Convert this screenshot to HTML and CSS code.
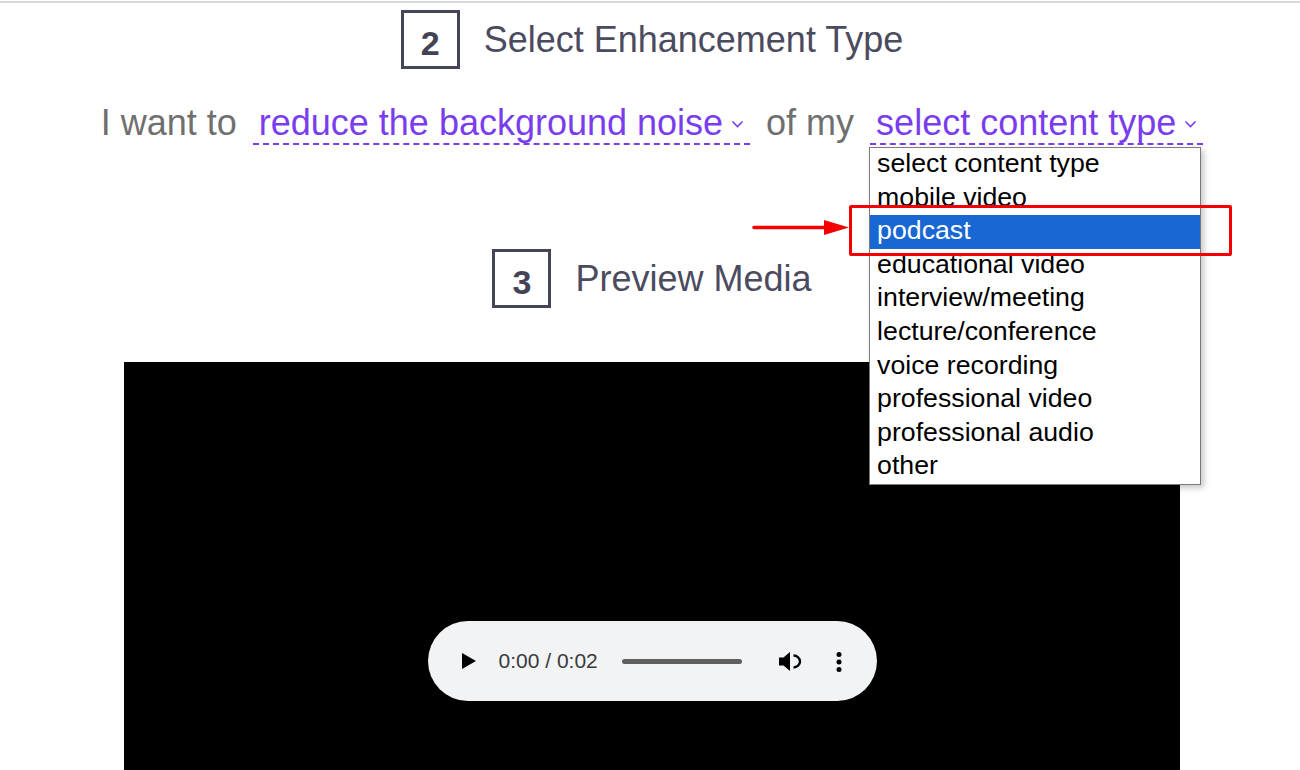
FILE: index.html
```html
<!DOCTYPE html>
<html lang="en">
<head>
    <meta charset="UTF-8">
    <meta name="viewport" content="width=device-width, initial-scale=1.0">
    <title>Enhance Media</title>
    <link rel="stylesheet" href="styles.css">
</head>
<body>
    <div class="topline"></div>
    <main class="page">
        <section class="step step-type">
            <div class="step-num">2</div>
            <h2 class="step-title">Select Enhancement Type</h2>
        </section>

        <div class="sentence">
            <span class="plain">I want to</span>
            <div class="pick">reduce the background noise<svg class="chev" width="13" height="8" viewBox="0 0 13 8"><polyline points="1.5,1.5 6.5,6.5 11.5,1.5" /></svg></div>
            <span class="plain">of my</span>
            <div class="pick pick-open">select content type<svg class="chev" width="13" height="8" viewBox="0 0 13 8"><polyline points="1.5,1.5 6.5,6.5 11.5,1.5" /></svg>
                <ul class="options">
                    <li>select content type</li>
                    <li>mobile video</li>
                    <li class="active">podcast</li>
                    <li>educational video</li>
                    <li>interview/meeting</li>
                    <li>lecture/conference</li>
                    <li>voice recording</li>
                    <li>professional video</li>
                    <li>professional audio</li>
                    <li>other</li>
                    <!-- annotation drawn on top of the open list -->
                    <svg class="arrow" width="97" height="15" viewBox="0 0 97 15">
                        <line x1="2" y1="7.5" x2="74" y2="7.5" />
                        <polygon points="72,0 97,7.5 72,15" />
                    </svg>
                    <span class="callout"></span>
                </ul>
            </div>
        </div>

        <section class="step step-preview">
            <div class="step-num">3</div>
            <h2 class="step-title">Preview Media</h2>
        </section>

        <div class="video">
            <div class="player">
                <svg class="play" width="14" height="16" viewBox="0 0 14 16"><polygon points="0,0 14,8 0,16" /></svg>
                <span class="time">0:00 / 0:02</span>
                <div class="track"></div>
                <svg class="volume" width="24" height="21" viewBox="0 0 24 21">
                    <path class="spk" d="M0 6.5H4.5L11 1V20L4.5 14.5H0Z" />
                    <path class="wave" d="M14.5 4.5a6.5 6 0 0 1 0 12" />
                </svg>
                <svg class="more" width="10" height="20" viewBox="0 0 10 20">
                    <circle cx="5" cy="2.5" r="2.5" />
                    <circle cx="5" cy="10" r="2.5" />
                    <circle cx="5" cy="17.5" r="2.5" />
                </svg>
            </div>
        </div>
    </main>
</body>
</html>
```

FILE: styles.css
```css
html {
    overflow: hidden;
}
body {
    margin: 0;
    padding-top: 1px;
    background: #fff;
    font-family: "Liberation Sans", Arial, sans-serif;
}
.topline {
    height: 2px;
    background: #d9d9d9;
}
.page {
    padding-left: 4px;
}

.step {
    display: flex;
    justify-content: center;
    align-items: center;
    gap: 24px;
}
.step-type {
    margin-top: 7px;
}
.step-preview {
    margin-top: 104px;
}
.step-num {
    box-sizing: border-box;
    width: 59px;
    height: 59px;
    padding-top: 6px;
    border: 3px solid #454558;
    display: flex;
    align-items: center;
    justify-content: center;
    font-size: 34px;
    font-weight: bold;
    line-height: 1;
    color: #434356;
}
.step-title {
    margin: 0;
    font-size: 36px;
    font-weight: normal;
    line-height: 1.15;
    color: #4b4b5f;
}

.sentence {
    margin-top: 33px;
    display: flex;
    justify-content: center;
    align-items: baseline;
    gap: 16px;
    font-size: 36px;
    line-height: 41px;
}
.plain {
    color: #6f6f6f;
}
.pick {
    position: relative;
    padding: 0 6px 0 6px;
    color: #7a3ded;
    border-bottom: 2px dashed #7a3ded;
    white-space: nowrap;
}
.chev {
    margin-left: 8px;
    vertical-align: 7px;
}
.chev polyline {
    fill: none;
    stroke: #7a3ded;
    stroke-width: 1.6;
}

.options {
    position: absolute;
    top: calc(100% + 4px);
    left: -1px;
    width: 332px;
    box-sizing: border-box;
    margin: 0;
    padding: 0;
    list-style: none;
    background: #fff;
    border: 1px solid #7a7a7a;
    box-shadow: 3px 3px 6px rgba(0, 0, 0, 0.22);
    font-size: 26.7px;
    line-height: 30px;
    color: #000;
    z-index: 5;
}
.options li {
    height: 33.6px;
    padding: 0 7px;
}
.options li.active {
    background: #1967d2;
    color: #fff;
}
.arrow {
    position: absolute;
    left: -118px;
    top: 72px;
}
.arrow line {
    stroke: #f40000;
    stroke-width: 3.5;
    stroke-linecap: round;
}
.arrow polygon {
    fill: #f40000;
}
.callout {
    position: absolute;
    left: -21px;
    top: 56.5px;
    width: 383px;
    height: 51px;
    box-sizing: border-box;
    border: 3px solid #f40000;
    border-radius: 2px;
}

.video {
    width: 1056px;
    height: 598px;
    margin: 54px auto 0;
    background: #000;
    display: flex;
    align-items: center;
    justify-content: center;
}
.player {
    box-sizing: border-box;
    width: 449px;
    height: 80px;
    padding-left: 34px;
    border-radius: 40px;
    background: #f1f3f4;
    display: flex;
    align-items: center;
}
.play {
    fill: #000;
}
.time {
    margin-left: 23px;
    font-size: 21px;
    color: #3a3a3a;
}
.track {
    width: 120px;
    height: 5px;
    margin-left: 24px;
    border-radius: 3px;
    background: #5f5f5f;
}
.volume {
    margin-left: 37px;
}
.volume .spk {
    fill: #000;
}
.volume .wave {
    fill: none;
    stroke: #000;
    stroke-width: 2.4;
}
.more {
    margin-left: 31px;
    margin-top: 2px;
    fill: #000;
}
```
